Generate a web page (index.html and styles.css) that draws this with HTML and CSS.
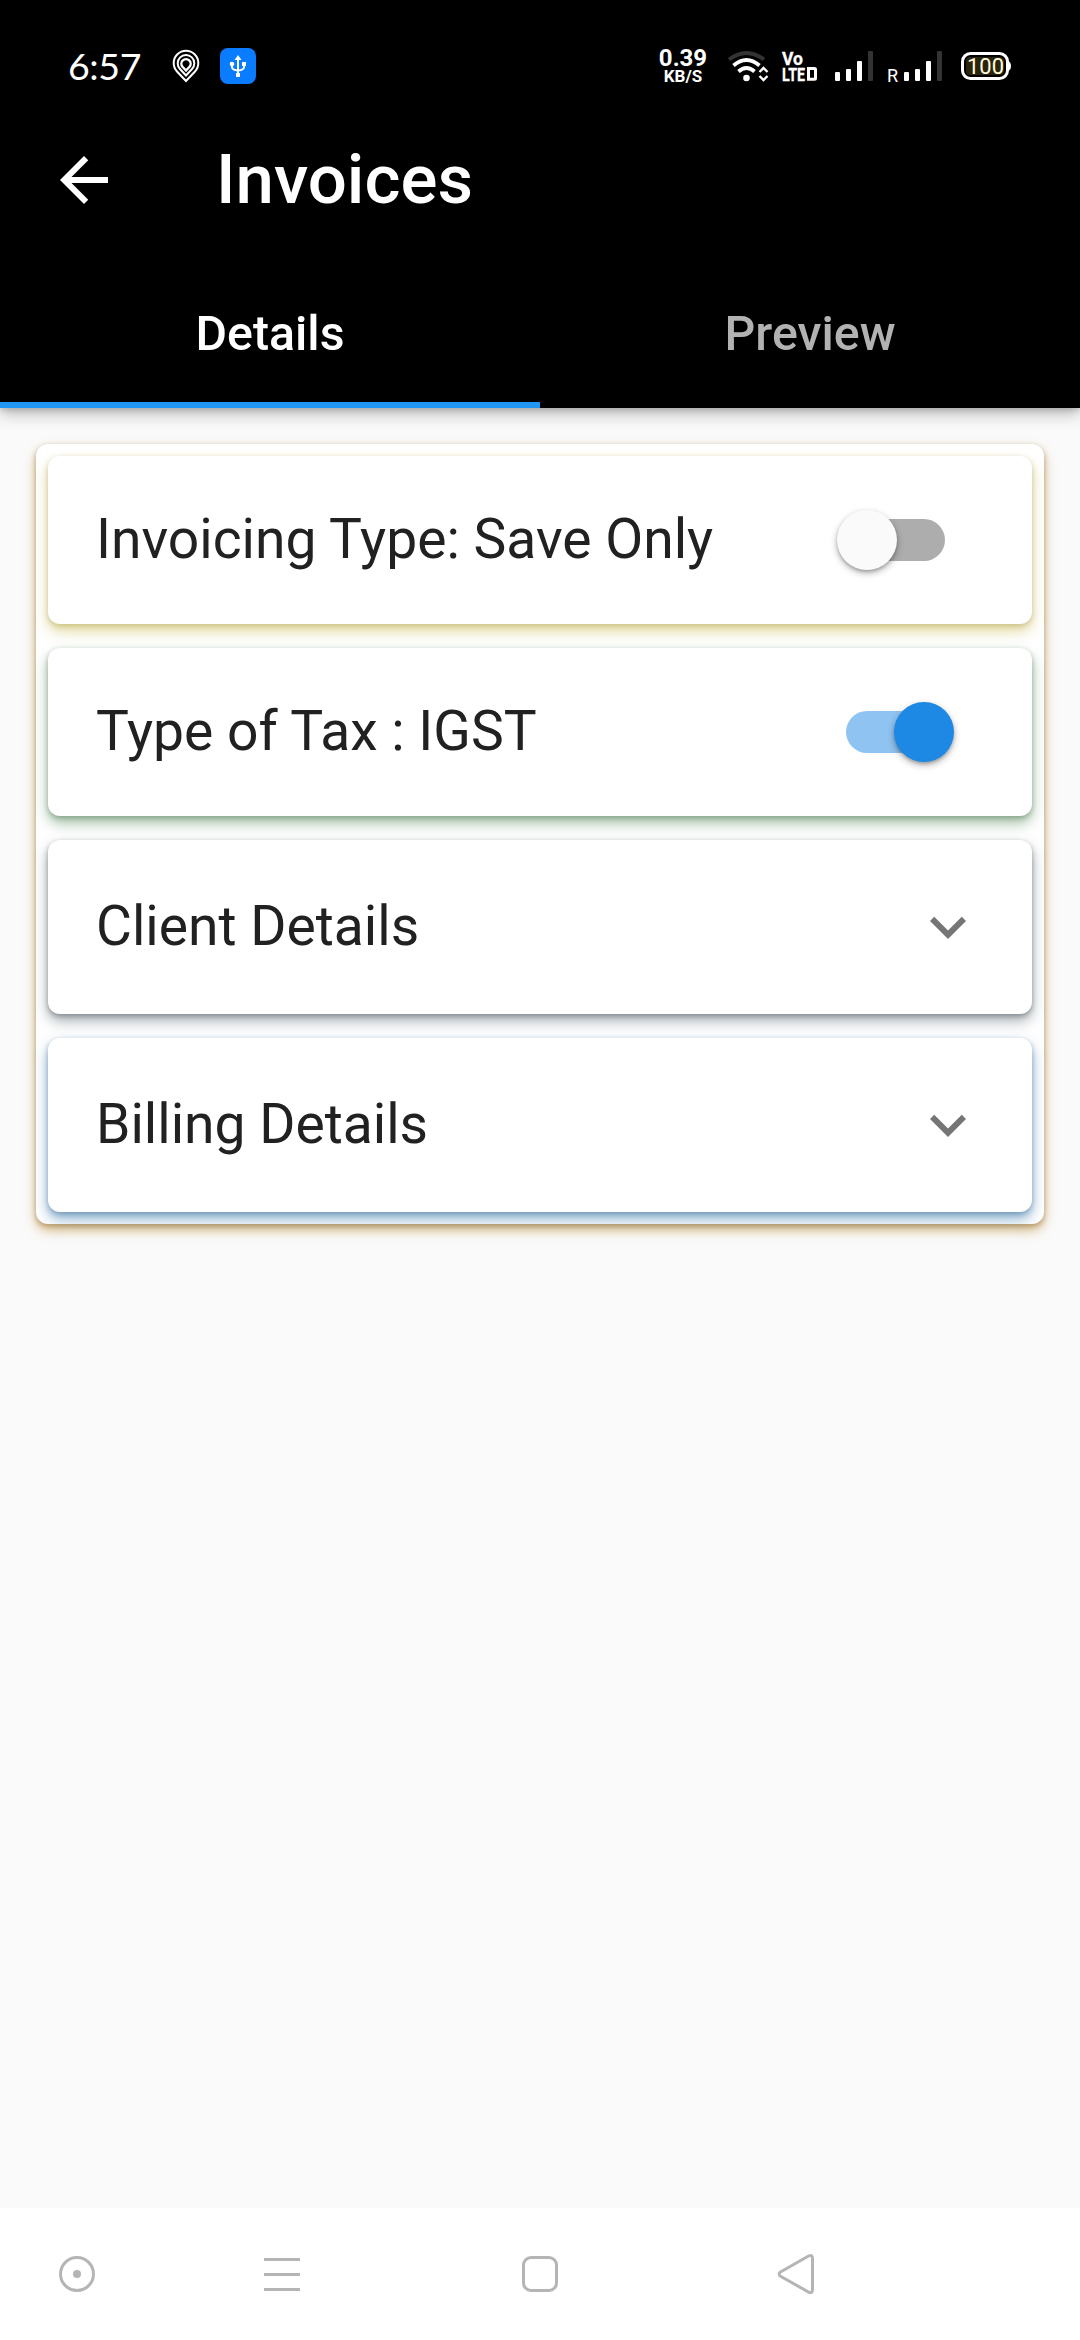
FILE: index.html
```html
<!DOCTYPE html>
<html lang="en">
<head>
<meta charset="utf-8">
<title>Invoices</title>
<link rel="stylesheet" href="styles.css">
</head>
<body>
<div class="screen">
  <header class="header">
    <div class="status">
      <span class="clock">6:57</span>
      <svg class="pin" width="28" height="34" viewBox="0 0 28 34" fill="none" stroke="#fff" stroke-width="2">
        <path d="M14 32L5 22.500A12.300 12.300 0 1 1 23 22.500Z"/>
        <path d="M14 26.500L8 20A8.300 8.300 0 1 1 20 20Z"/>
        <path d="M14 21.500L10.500 17.800A4.600 4.600 0 1 1 17.500 17.800Z" stroke-width="2.400"/>
      </svg>
      <svg class="usb" width="36" height="36" viewBox="0 0 36 36">
        <rect width="36" height="36" rx="8" fill="#0a7cff"/>
        <path d="M18 10V26M12 16v3q0 3 6 3.500q6-.5 6-3.500v-3" fill="none" stroke="#fff" stroke-width="2"/>
        <path d="M18 7l3.500 5h-7z" fill="#fff"/>
        <circle cx="12" cy="16" r="2.300" fill="#fff"/><rect x="22" y="14" width="4" height="4" fill="#fff"/><rect x="16" y="25" width="4" height="4" fill="#fff"/>
      </svg>
      <div class="speed"><span class="rate">0.39</span><span class="unit">KB/S</span></div>
      <svg class="wifi" width="42" height="34" viewBox="0 0 42 34" fill="none">
        <path d="M2 9.500Q19.500-3.500 37 9.500" stroke="#333" stroke-width="4"/>
        <path d="M6.500 15.500Q19.500 4.500 32.500 15.500M11.500 21.500Q19.500 14.500 27.500 21.500" stroke="#fff" stroke-width="3.800"/>
        <circle cx="19.500" cy="28" r="3.300" fill="#fff"/>
        <path d="M32.500 22l4-4 4 4M32.500 26l4 4 4-4" stroke="#fff" stroke-width="2.400"/>
      </svg>
      <svg class="volte" width="36" height="32" viewBox="0 0 36 32">
        <text class="volte-text" x="0" y="14" textLength="21" lengthAdjust="spacingAndGlyphs">Vo</text>
        <text class="volte-text" x="0" y="29.700" textLength="23" lengthAdjust="spacingAndGlyphs">LTE</text>
        <path d="M26.500 17.500h6q1 0 1 1v8.700q0 1-1 1h-6z" fill="none" stroke="#fff" stroke-width="3"/>
      </svg>
      <svg class="signal" width="38" height="30" viewBox="0 0 38 30" fill="#fff">
        <rect y="21" width="5" height="9" rx="1"/><rect x="11" y="18" width="5" height="12" rx="1"/><rect x="22" y="10" width="5" height="20" rx="1"/><rect x="33" width="5" height="30" rx="1" fill="#333"/>
      </svg>
      <span class="roam">R</span>
      <svg class="signal signal-two" width="38" height="30" viewBox="0 0 38 30" fill="#fff">
        <rect y="21" width="5" height="9" rx="1"/><rect x="11" y="18" width="5" height="12" rx="1"/><rect x="22" y="10" width="5" height="20" rx="1"/><rect x="33" width="5" height="30" rx="1" fill="#333"/>
      </svg>
      <svg class="battery" width="51" height="28" viewBox="0 0 51 28">
        <rect x="1.500" y="1.500" width="45" height="25" rx="8" fill="#000" stroke="#fff" stroke-width="3"/>
        <rect x="5" y="5" width="38" height="18" rx="4" fill="#2a240b"/>
        <path d="M47 9q3 1 3 5t-3 5z" fill="#fff"/>
        <text class="battery-text" x="6" y="22" textLength="37" lengthAdjust="spacingAndGlyphs">100</text>
      </svg>
    </div>
    <div class="toolbar">
      <svg width="72" height="72" viewBox="0 0 24 24" fill="#fff"><path d="M20 11H7.830l5.590-5.590L12 4l-8 8 8 8 1.410-1.410L7.830 13H20v-2z"/></svg>
      <h1 class="title">Invoices</h1>
    </div>
    <nav class="tabs">
      <div class="tab tab-active">Details</div>
      <div class="tab">Preview</div>
    </nav>
  </header>
  <main class="content">
    <section class="panel">
      <div class="card card-yellow"><span class="label">Invoicing Type: Save Only</span><span class="switch"><span class="thumb"></span></span></div>
      <div class="card card-green"><span class="label">Type of Tax : IGST</span><span class="switch switch-on"><span class="thumb"></span></span></div>
      <div class="card card-grey card-tall"><span class="label">Client Details</span><svg width="72" height="72" viewBox="0 0 24 24" fill="#757575"><path d="M16.590 8.590L12 13.170 7.410 8.590 6 10l6 6 6-6z"/></svg></div>
      <div class="card card-blue card-tall"><span class="label">Billing Details</span><svg width="72" height="72" viewBox="0 0 24 24" fill="#757575"><path d="M16.590 8.590L12 13.170 7.410 8.590 6 10l6 6 6-6z"/></svg></div>
    </section>
  </main>
  <footer class="navbar">
    <svg class="nav-assist" width="42" height="42" viewBox="0 0 42 42"><circle cx="21" cy="21" r="16.500"/><circle cx="21" cy="21" r="4" fill="#b5b5b5" stroke="none"/></svg>
    <svg class="nav-menu" width="42" height="42" viewBox="0 0 42 42"><path d="M3 6.500h36M3 21.500h36M3 36.500h36"/></svg>
    <svg class="nav-home" width="42" height="42" viewBox="0 0 42 42"><rect x="4.500" y="4.500" width="33" height="33" rx="7.500"/></svg>
    <svg class="nav-back" width="42" height="42" viewBox="0 0 42 42"><path d="M34 2.800L5.500 19Q2.700 21 5.500 23.300L34 39.300Q37.500 40.500 37.500 36.800V5.300Q37.500 1.600 34 2.800Z"/></svg>
  </footer>
</div>
</body>
</html>
```

FILE: styles.css
```css
* { box-sizing: border-box; }
body { margin: 0; font-family: Roboto, "Noto Sans", sans-serif; }
svg { display: block; flex: none; overflow: visible; }
.screen { width: 1080px; height: 2340px; display: flex; flex-direction: column; background: #fafafa; }

.header { height: 408px; flex: none; background: #000; color: #fff; box-shadow: 0 6px 15px rgba(0,0,0,.25), 0 2px 6px rgba(0,0,0,.16); }
.status { height: 96px; display: flex; align-items: flex-start; padding: 48px 68px 0 68px; }
.clock { width: 104px; font-family: Lato, "Noto Sans", sans-serif; font-size: 37.500px; line-height: 36px; letter-spacing: -.4px; }
.pin { margin-top: 1px; }
.usb { margin-left: 20px; }
.speed { margin-left: auto; width: 48px; display: flex; flex-direction: column; align-items: center; font-weight: 700; }
.rate { font-size: 24px; line-height: 20px; }
.unit { font-size: 17px; line-height: 17px; }
.wifi { margin: 2px 0 0 20px; }
.volte { margin: 3px 0 0 13px; }
.volte-text { font-size: 18.600px; font-weight: 700; fill: #fff; stroke: #fff; stroke-width: .3px; }
.signal { margin: 3px 0 0 17px; }
.roam { width: 16px; margin: 19px 0 0 14px; font-size: 18px; line-height: 18px; }
.signal-two { margin-left: 1px; }
.battery { margin: 4px 0 0 19px; }
.battery-text { font-size: 22px; fill: #fffbe0; }
.toolbar { height: 168px; display: flex; align-items: center; padding: 0 48px; gap: 96px; }
.title { margin: 0; font-size: 69px; font-weight: 500; line-height: 80px; }
.tabs { height: 144px; display: flex; }
.tab { flex: 1; display: flex; align-items: center; justify-content: center; font-size: 48.300px; font-weight: 500; color: #b2b2b2; border-bottom: 6px solid transparent; }
.tab-active { color: #fff; border-bottom-color: #2196f3; }

.content { flex: 1; padding: 36px; }
.panel { display: flex; flex-direction: column; gap: 24px; padding: 12px; background: #fff; border-radius: 12px; box-shadow: 0 6px 12px rgba(190,130,30,.55), 0 2px 5px rgba(110,90,60,.42); }
.card { height: 168px; display: flex; align-items: center; justify-content: space-between; padding: 0 48px; background: #fff; border-radius: 12px; color: #212121; font-size: 55.200px; line-height: 64px; }
.card-tall { height: 174px; }
.label { padding-bottom: 3px; }
.card-yellow { box-shadow: 0 7px 14px rgba(190,170,40,.46), 0 2px 5px rgba(110,100,40,.28); }
.card-green { box-shadow: 0 7px 14px rgba(60,120,65,.48), 0 2px 5px rgba(30,70,30,.3); }
.card-grey { box-shadow: 0 7px 14px rgba(80,95,105,.5), 0 2px 5px rgba(30,35,40,.36); }
.card-blue { box-shadow: 0 7px 14px rgba(35,105,165,.52), 0 2px 5px rgba(20,60,90,.3); }

.switch { width: 99px; height: 42px; margin-right: 39px; border-radius: 21px; background: #adadad; display: flex; align-items: center; }
.thumb { flex: none; width: 60px; height: 60px; margin: 0 -9px; border-radius: 50%; background: #fafafa; box-shadow: 0 3px 7px rgba(0,0,0,.3), 0 2px 3px rgba(0,0,0,.16); }
.switch-on { justify-content: flex-end; background: #8fc3f1; }
.switch-on .thumb { background: #1e88e5; }

.navbar { height: 132px; flex: none; display: flex; background: #fff; padding: 45px 0 0 56px; }
.navbar svg { fill: none; stroke: #b5b5b5; stroke-width: 3; }
.nav-menu { margin-left: 163px; }
.nav-home { margin-left: 216px; }
.nav-back { margin-left: 214px; }
```
